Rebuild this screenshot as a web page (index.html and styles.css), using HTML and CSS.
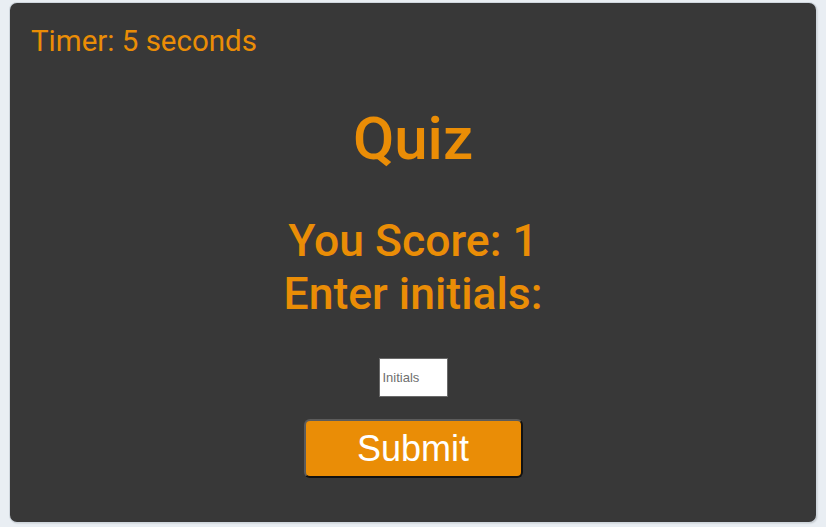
FILE: index.html
```html
<!DOCTYPE html>
<html>
<head>
<meta charset="utf-8">
<link rel="stylesheet" href="styles.css">
</head>
<body>
<main class="card">
  <div class="timer">Timer: 5 seconds</div>
  <h1 class="title">Quiz</h1>
  <h2 class="score">You Score: 1<br>Enter initials:</h2>
  <form class="form">
    <input class="initials" type="text" placeholder="Initials">
    <button class="submit" type="button">Submit</button>
  </form>
</main>
</body>
</html>
```
FILE: styles.css
```css
html, body {
  margin: 0;
  padding: 0;
  background: #e9eef3;
}
body {
  padding: 3px 10px 5px 10px;
  font-family: Roboto, "Liberation Sans", sans-serif;
}
.card {
  box-sizing: border-box;
  width: 806px;
  height: 519px;
  background: #383838;
  border-radius: 7px;
  box-shadow: 0 0 0 1px #cfd6dd, 1px 1px 2px rgba(0,0,0,0.25);
  padding: 21px 21px;
  color: #ea8d06;
  display: flex;
  flex-direction: column;
  align-items: stretch;
}
.timer {
  font-size: 29.5px;
  line-height: 34px;
  align-self: flex-start;
}
.title {
  margin: 45px 0 0 0;
  text-align: center;
  font-size: 60px;
  line-height: 72px;
  font-weight: 500;
}
.score {
  margin: 40px 0 0 0;
  text-align: center;
  font-size: 44.5px;
  line-height: 53px;
  font-weight: 500;
}
.form {
  margin-top: 37px;
  display: flex;
  flex-direction: column;
  align-items: center;
}
.initials {
  box-sizing: border-box;
  width: 69px;
  height: 39px;
  border: 1px solid #6a6a6a;
  background: #fff;
  padding: 0 3px;
  font-family: "Liberation Sans", Arial, sans-serif;
  font-size: 13px;
  margin: 0;
}
.initials::placeholder {
  color: #6f6f6f;
}
.submit {
  box-sizing: border-box;
  margin-top: 22px;
  width: 219px;
  height: 59px;
  background: #ea8d06;
  color: #fff;
  border: 2px solid #5c5c5c;
  border-right-color: #111;
  border-bottom-color: #111;
  border-radius: 6px;
  font-family: "Liberation Sans", Arial, sans-serif;
  font-size: 36px;
  padding: 0;
}
```
